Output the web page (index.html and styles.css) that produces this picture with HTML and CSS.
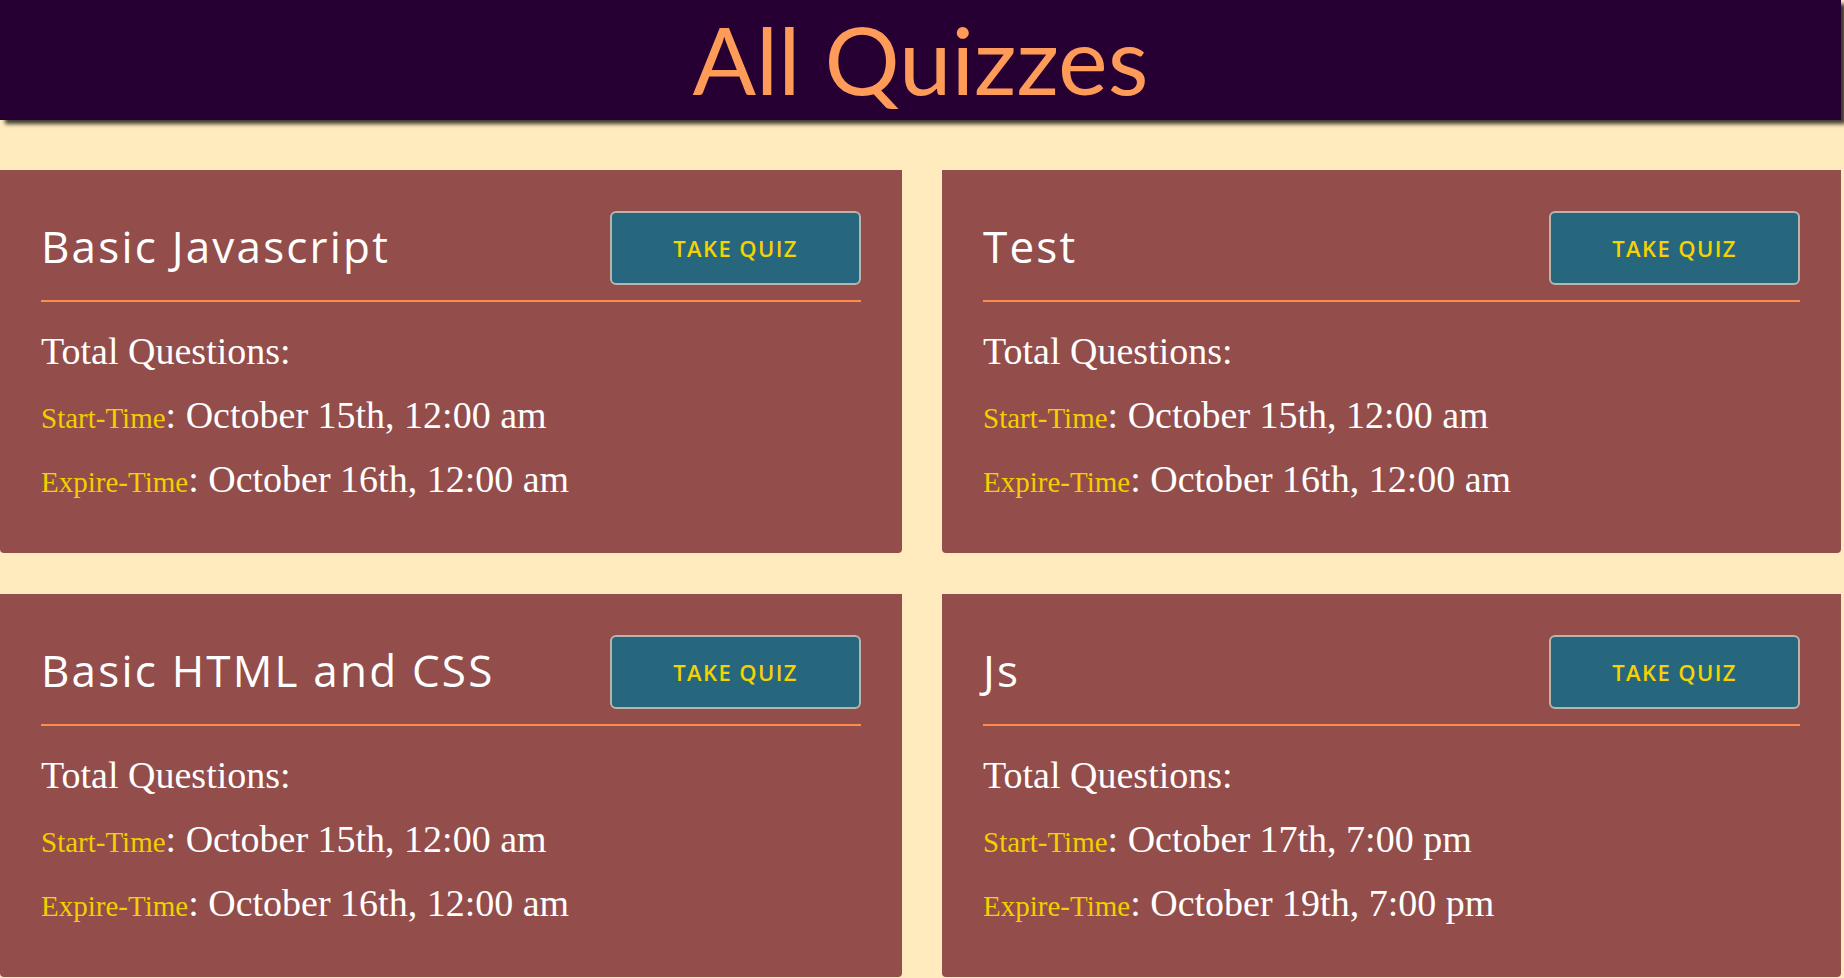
FILE: index.html
```html
<!DOCTYPE html>
<html lang="en">
<head>
<meta charset="utf-8">
<title>All Quizzes</title>
<link rel="stylesheet" href="styles.css">
</head>
<body>
<header class="top-bar">
  <h1 class="page-title">All Quizzes</h1>
</header>
<main class="quiz-grid">
  <section class="quiz-card">
    <div class="card-head">
      <h2 class="quiz-name">Basic Javascript</h2>
      <button class="take-btn">Take Quiz</button>
    </div>
    <div class="card-body">
      <p class="info">Total Questions:</p>
      <p class="info"><span class="label">Start-Time</span>: October 15th, 12:00 am</p>
      <p class="info"><span class="label">Expire-Time</span>: October 16th, 12:00 am</p>
    </div>
  </section>
  <section class="quiz-card">
    <div class="card-head">
      <h2 class="quiz-name">Test</h2>
      <button class="take-btn">Take Quiz</button>
    </div>
    <div class="card-body">
      <p class="info">Total Questions:</p>
      <p class="info"><span class="label">Start-Time</span>: October 15th, 12:00 am</p>
      <p class="info"><span class="label">Expire-Time</span>: October 16th, 12:00 am</p>
    </div>
  </section>
  <section class="quiz-card">
    <div class="card-head">
      <h2 class="quiz-name">Basic HTML and CSS</h2>
      <button class="take-btn">Take Quiz</button>
    </div>
    <div class="card-body">
      <p class="info">Total Questions:</p>
      <p class="info"><span class="label">Start-Time</span>: October 15th, 12:00 am</p>
      <p class="info"><span class="label">Expire-Time</span>: October 16th, 12:00 am</p>
    </div>
  </section>
  <section class="quiz-card">
    <div class="card-head">
      <h2 class="quiz-name">Js</h2>
      <button class="take-btn">Take Quiz</button>
    </div>
    <div class="card-body">
      <p class="info">Total Questions:</p>
      <p class="info"><span class="label">Start-Time</span>: October 17th, 7:00 pm</p>
      <p class="info"><span class="label">Expire-Time</span>: October 19th, 7:00 pm</p>
    </div>
  </section>
</main>
</body>
</html>
```

FILE: styles.css
```css
html, body {
  margin: 0;
  padding: 0;
}

body {
  background: #ffebbd;
  font-family: "Liberation Serif", serif;
  overflow: hidden;
}

.top-bar {
  height: 120px;
  margin-right: 3px;
  background: #270033;
  box-shadow: 5px 4px 4px rgba(0, 0, 0, 0.75);
  display: flex;
  align-items: center;
  justify-content: center;
  position: relative;
  z-index: 1;
}

.page-title {
  margin: 0;
  font-family: "Lato", "Open Sans", sans-serif;
  font-weight: 400;
  font-size: 94px;
  line-height: 1;
  color: #ff9b59;
  padding-bottom: 2px;
}

.quiz-grid {
  display: grid;
  grid-template-columns: 902px 899px;
  column-gap: 40px;
  row-gap: 41px;
  padding-top: 50px;
}

.quiz-card {
  background: #934d4a;
  border-radius: 0 0 4px 4px;
  padding: 41px 41px 42px;
  height: 383px;
  box-sizing: border-box;
}

.card-head {
  display: flex;
  align-items: center;
  justify-content: space-between;
  padding-bottom: 15px;
  border-bottom: 2px solid #ff8b4c;
}

.quiz-name {
  margin: 0;
  font-family: "Open Sans", "Lato", sans-serif;
  font-weight: 400;
  font-size: 44px;
  letter-spacing: 2.2px;
  line-height: 1;
  color: #ffffff;
  padding-bottom: 4px;
}

.take-btn {
  width: 251px;
  height: 74px;
  background: #26677e;
  border: 2px solid #b9b3ad;
  border-radius: 6px;
  color: #f5d200;
  font-family: "Open Sans", sans-serif;
  font-weight: 600;
  font-size: 22px;
  letter-spacing: 1.4px;
  text-transform: uppercase;
  padding: 0;
}

.card-body {
  padding-top: 17px;
}

.info {
  margin: 0;
  font-size: 38px;
  line-height: 64px;
  color: #ffffff;
  white-space: nowrap;
}

.label {
  font-size: 29px;
  line-height: 1;
  color: #f2cf00;
}
```
